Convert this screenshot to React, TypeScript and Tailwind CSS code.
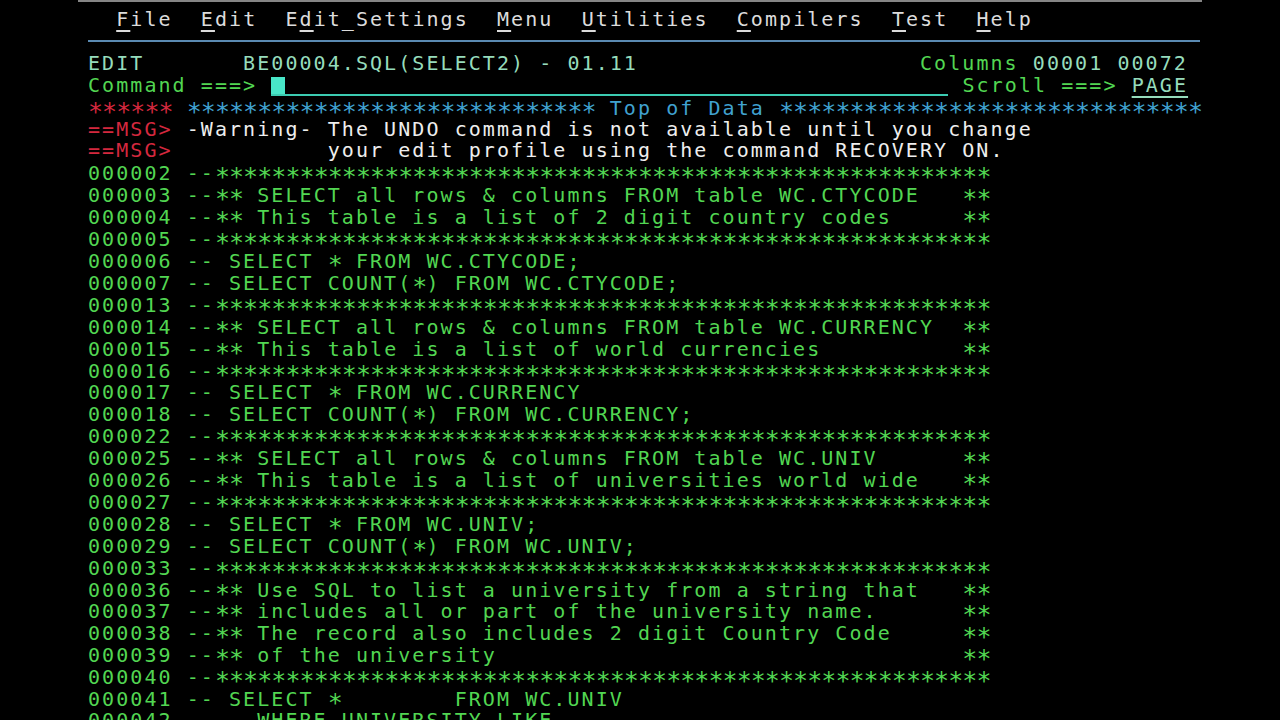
import React from "react";

const GREEN = "text-[#52d652]";
const MINT = "text-[#96dcbc]";
const RED = "text-[#d4283e]";
const BLUE = "text-[#40a2d0]";
const WHITE = "text-[#eeeeee]";

function Row({ children }: { children?: React.ReactNode }) {
  return <div className="h-[21.92px] whitespace-pre">{children}</div>;
}

function T({ s }: { s: string }) {
  const parts = s.split(/(\*+)/);
  return (
    <>
      {parts.map((p, i) =>
        p.startsWith("*") ? (
          <span key={i} className="relative top-[5px] text-[25px] tracking-[-0.95px]">
            {p}
          </span>
        ) : (
          <React.Fragment key={i}>{p}</React.Fragment>
        )
      )}
    </>
  );
}

const starLine = "--" + "*".repeat(55);
const cmt = (s: string) => s.padEnd(55) + "**";

const data: [string, string][] = [
  ["000002", starLine],
  ["000003", cmt("--** SELECT all rows & columns FROM table WC.CTYCODE")],
  ["000004", cmt("--** This table is a list of 2 digit country codes")],
  ["000005", starLine],
  ["000006", "-- SELECT * FROM WC.CTYCODE;"],
  ["000007", "-- SELECT COUNT(*) FROM WC.CTYCODE;"],
  ["000013", starLine],
  ["000014", cmt("--** SELECT all rows & columns FROM table WC.CURRENCY")],
  ["000015", cmt("--** This table is a list of world currencies")],
  ["000016", starLine],
  ["000017", "-- SELECT * FROM WC.CURRENCY"],
  ["000018", "-- SELECT COUNT(*) FROM WC.CURRENCY;"],
  ["000022", starLine],
  ["000025", cmt("--** SELECT all rows & columns FROM table WC.UNIV")],
  ["000026", cmt("--** This table is a list of universities world wide")],
  ["000027", starLine],
  ["000028", "-- SELECT * FROM WC.UNIV;"],
  ["000029", "-- SELECT COUNT(*) FROM WC.UNIV;"],
  ["000033", starLine],
  ["000036", cmt("--** Use SQL to list a university from a string that")],
  ["000037", cmt("--** includes all or part of the university name.")],
  ["000038", cmt("--** The record also includes 2 digit Country Code")],
  ["000039", cmt("--** of the university")],
  ["000040", starLine],
  ["000041", "-- SELECT *        FROM WC.UNIV"],
  ["000042", "--   WHERE UNIVERSITY LIKE"],
];

const menu: [string, number][] = [
  ["File", 0],
  ["Edit", 0],
  ["Edit_Settings", 1],
  ["Menu", 0],
  ["Utilities", 0],
  ["Compilers", 0],
  ["Test", 0],
  ["Help", 0],
];

function MenuItem({ label, u }: { label: string; u: number }) {
  return (
    <>
      {label.slice(0, u)}
      <span className="underline decoration-2 underline-offset-[4px]">{label[u]}</span>
      {label.slice(u + 1)}
    </>
  );
}

export default function App() {
  return (
    <div className="w-full h-[720px] bg-black overflow-hidden font-['DejaVu_Sans_Mono',monospace] text-[20px] leading-[22px] tracking-[2.06px]">
      <div className="ml-[78px] w-[1124px] h-[2px] bg-[#858585]" />
      <div className="pl-[88px] pt-[6px]">
        <Row>
          <span className="text-[#dcdcdc]">
            {"  "}
            {menu.map(([l, u], i) => (
              <React.Fragment key={l}>
                {i > 0 ? "  " : ""}
                <MenuItem label={l} u={u} />
              </React.Fragment>
            ))}
          </span>
        </Row>
        <div className="h-[21.92px] flex items-center">
          <div className="w-[1112px] h-[2px] bg-[#5a8ab2]" />
        </div>
        <Row>
          <span className={MINT}>{"EDIT       BE00004.SQL(SELECT2) - 01.11"}</span>
          {" ".repeat(20)}
          <span className={GREEN}>Columns</span>
          <span className={MINT}>{" 00001 00072"}</span>
        </Row>
        <Row>
          <span className={GREEN}>{"Command ===> "}</span>
          <span className="inline-block align-top w-[677px] h-[22px] border-b-2 border-[#3ccbb2]">
            <span className="block mt-[3px] w-[14px] h-[17px] bg-[#48e6c8]" />
          </span>
          <span className={GREEN}>{" Scroll ===> "}</span>
          <span className={`${MINT} underline decoration-2 underline-offset-[4px]`}>PAGE</span>
        </Row>
        <Row>
          <span className={RED}>
            <T s="******" />
          </span>
          {" "}
          <span className={BLUE}>
            <T s={"*".repeat(29) + " Top of Data " + "*".repeat(30)} />
          </span>
        </Row>
        <Row>
          <span className={RED}>{"==MSG>"}</span>
          <span className={WHITE}>
            {" -Warning- The UNDO command is not available until you change"}
          </span>
        </Row>
        <Row>
          <span className={RED}>{"==MSG>"}</span>
          <span className={WHITE}>
            {"           your edit profile using the command RECOVERY ON."}
          </span>
        </Row>
        {data.map(([n, t]) => (
          <Row key={n}>
            <span className={GREEN}>
              <T s={n + " " + t} />
            </span>
          </Row>
        ))}
      </div>
    </div>
  );
}
